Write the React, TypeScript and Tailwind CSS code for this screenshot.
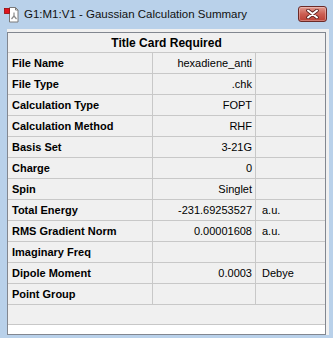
const rows: { label: string; value: string; unit: string }[] = [
  { label: 'File Name', value: 'hexadiene_anti', unit: '' },
  { label: 'File Type', value: '.chk', unit: '' },
  { label: 'Calculation Type', value: 'FOPT', unit: '' },
  { label: 'Calculation Method', value: 'RHF', unit: '' },
  { label: 'Basis Set', value: '3-21G', unit: '' },
  { label: 'Charge', value: '0', unit: '' },
  { label: 'Spin', value: 'Singlet', unit: '' },
  { label: 'Total Energy', value: '-231.69253527', unit: 'a.u.' },
  { label: 'RMS Gradient Norm', value: '0.00001608', unit: 'a.u.' },
  { label: 'Imaginary Freq', value: '', unit: '' },
  { label: 'Dipole Moment', value: '0.0003', unit: 'Debye' },
  { label: 'Point Group', value: '', unit: '' },
];

function AppIcon() {
  return (
    <svg width="16" height="17" viewBox="0 0 16 17" className="shrink-0">
      <path d="M6.5 1.5h6l2.5 2.5v12h-8.5z" fill="#ffffff" stroke="#7a7a7a" />
      <path d="M12.5 1.5v2.5h2.5" fill="none" stroke="#7a7a7a" />
      <line x1="11" y1="6.5" x2="11" y2="10" stroke="#8a8a8a" strokeWidth="1.2" />
      <line x1="11" y1="10" x2="8.5" y2="13" stroke="#8a8a8a" strokeWidth="1.2" />
      <line x1="11" y1="10" x2="13.5" y2="13" stroke="#8a8a8a" strokeWidth="1.2" />
      <rect x="1.5" y="2.5" width="5" height="5" fill="#e0141e" stroke="#9a0a0a" strokeWidth="0.8" />
    </svg>
  );
}

function CloseButton() {
  return (
    <div className="w-[29px] h-[16px] rounded-[3px] border border-[#6b2a28] bg-gradient-to-b from-[#e09a90] via-[#cc5e52] to-[#bb4035] flex items-center justify-center shadow-[inset_0_0_0_1px_rgba(255,255,255,0.3)]">
      <svg width="13" height="10" viewBox="0 0 13 10">
        <path d="M2 1.5L11 8.5M11 1.5L2 8.5" stroke="#5a2020" strokeWidth="3.6" strokeLinecap="round" />
        <path d="M2 1.5L11 8.5M11 1.5L2 8.5" stroke="#ffffff" strokeWidth="2" strokeLinecap="round" />
      </svg>
    </div>
  );
}

export default function App() {
  return (
    <div
      className="w-[333px] h-[338px] bg-[#b9d1ea] flex flex-col overflow-hidden"
      style={{ fontFamily: '"Liberation Sans", Arial, sans-serif' }}
    >
      <div className="h-[29px] flex items-center pl-[3px] pr-[6px] shrink-0">
        <AppIcon />
        <span className="ml-[5px] text-[11.5px] text-[#111] flex-1 whitespace-nowrap">
          G1:M1:V1 - Gaussian Calculation Summary
        </span>
        <div className="mb-[2px]">
          <CloseButton />
        </div>
      </div>

      <div className="ml-[7px] w-[322px] bg-[#f0f0f0] pt-[3px] h-[306px]">
        <div className="w-[319px] h-[303px] border border-[#828790] flex flex-col text-[11px] text-black">
          <div className="h-[20px] shrink-0 border-b border-[#c8c8c8] flex items-center justify-center font-bold text-[12px]">
            Title Card Required
          </div>
          {rows.map((r) => (
            <div key={r.label} className="h-[21px] shrink-0 border-b border-[#c8c8c8] flex">
              <div className="w-[145px] border-r border-[#c8c8c8] flex items-center pl-[4px] font-bold whitespace-nowrap">
                {r.label}
              </div>
              <div className="w-[103px] border-r border-[#c8c8c8] flex items-center justify-end pr-[3px] whitespace-nowrap">
                {r.value}
              </div>
              <div className="flex-1 flex items-center pl-[6px] whitespace-nowrap">{r.unit}</div>
            </div>
          ))}
          <div className="h-[20px] shrink-0 border-b border-[#c8c8c8]" />
          <div className="h-[9px] shrink-0 bg-white" />
        </div>
      </div>
    </div>
  );
}
